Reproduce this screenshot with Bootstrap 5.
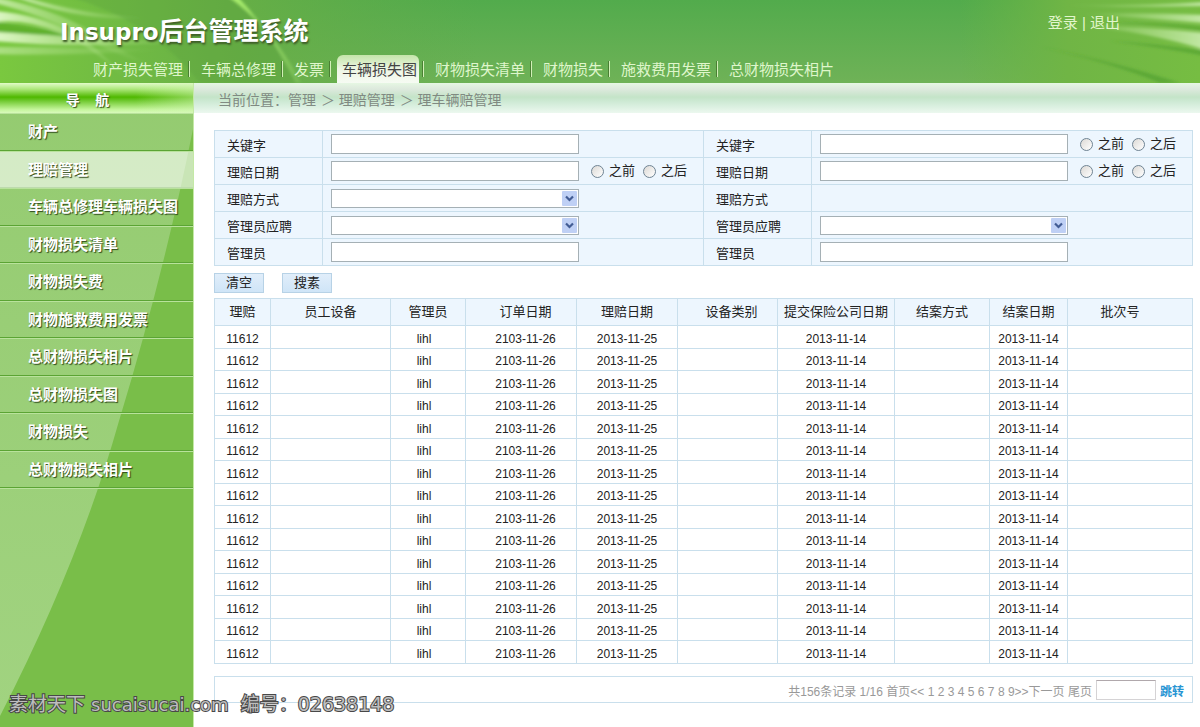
<!DOCTYPE html>
<html lang="zh-CN">
<head>
<meta charset="utf-8">
<meta name="viewport" content="width=device-width, initial-scale=1">
<title>Insupro后台管理系统</title>
<link rel="stylesheet" href="https://cdn.jsdelivr.net/npm/bootstrap@5.3.0/dist/css/bootstrap.min.css">
<style>
  :root { --line: #c9dfec; --panel: #edf6fe; }
  body { font-family: "Liberation Sans", "Noto Sans CJK SC", sans-serif; font-size: 13px; line-height: 18px; color: #222; background: #fff; }
  a { text-decoration: none; }

  /* header */
  .site-head { height: 83px; background: linear-gradient(#52ab4c, #6fb257); overflow: hidden; }
  .head-art { position: absolute; inset: 0; width: 100%; height: 100%; }
  .site-title { font: bold 25px/32px "DejaVu Sans", "Noto Sans CJK SC", sans-serif; color: #fff; margin: 0; padding: 16px 0 0 60px; text-shadow: 1px 2px 2px #3d5a26; }
  .site-title span { font-size: 23px; }
  .account { padding: 13px 80px 0 0; font-size: 15px; line-height: 20px; color: #e2f6cc; }
  .account a { color: inherit; }
  .main-tabs { padding-left: 82px; font-size: 15px; line-height: 30px; }
  .main-tabs li { display: flex; align-items: center; padding-left: 6px; }
  .main-tabs li:not(:last-child)::after { content: ""; width: 2px; height: 16px; background: linear-gradient(90deg, #4a7f33 50%, #d2f0b8 50%); }
  .main-tabs a { padding: 0 2px 0 5px; margin-right: 3px; height: 28px; color: #dff6cb; border-radius: 6px 6px 0 0; white-space: nowrap; }
  .main-tabs a.active { background: linear-gradient(#c4e5a9, #edf6e4 50%, #f6fbf3); color: #444; }

  /* sidebar */
  .side { width: 194px; background: #79be49; border-right: 1px solid #c4e9a6; }
  .side-art { position: absolute; inset: 0; width: 100%; height: 100%; }
  .side-title { height: 30px; padding-right: 18px; font-size: 14px; font-weight: bold; line-height: 34px; color: #fff; text-shadow: 1px 1px 1px #33511c; white-space: pre;
    background: linear-gradient(90deg, transparent 70%, #d2f5b477), linear-gradient(#e2fbc9, #aee87c 20%, #4fb800 47%, #6cc72b 58%, #c4f59b 88%, #d8fabb); }
  .side-menu li { height: 38px; border-bottom: 1px solid #5ba434; border-top: 1px solid #b9e29c; }
  .side-menu li:nth-child(even) { height: 37px; }
  .side-menu li:last-child { box-shadow: 0 1px #b9e29c; }
  .side-menu a { display: block; padding-left: 28px; font-size: 15px; font-weight: bold; line-height: 36px; color: #fff; text-shadow: 1px 1px 1px #2e4a1b; white-space: nowrap; }
  .side-menu a.active { background: rgba(255,255,255,.6); }

  /* content */
  .crumbs { height: 30px; padding-left: 24px; font-size: 14px; line-height: 34px; color: #808a82;
    background: linear-gradient(#e6f7e3, #dde9dd 20%, #c4e4c8 47%, #d0ebd7 65%, #ecf8ef); }
  .crumbs a { color: inherit; margin-right: 1px; }
  .sheet { padding: 17px 8px 24px 20px; }
  .grid-box { width: 100%; border-collapse: collapse; table-layout: fixed; }
  .grid-box th, .grid-box td { border: 1px solid var(--line); padding: 0; font-weight: normal; white-space: nowrap; }
  .filters { background: var(--panel); }
  .filters tr { height: 27px; }
  .filters th { padding: 4px 0 0 12px; }
  .filters td { padding-left: 8px; }
  .filters label { cursor: pointer; }
  .field { width: 248px; height: 20px; padding: 0 4px; border: 1px solid #a5b0b5; border-radius: 0; background: #fff; font-size: 12px; }
  select.field { height: 19px; appearance: none;
    background: #fff url("data:image/svg+xml,%3Csvg xmlns='http://www.w3.org/2000/svg' width='15' height='15'%3E%3Crect width='15' height='15' rx='1' fill='%23bfd0f5'/%3E%3Cpath d='M4 5.500l3.500 3.500 3.500-3.500' fill='none' stroke='%23425c94' stroke-width='2.200'/%3E%3C/svg%3E") no-repeat right 1px center; }
  .dot { appearance: none; width: 13px; height: 13px; margin: 0 5px 0 0; border: 1px solid #6f8494; border-radius: 50%; background: linear-gradient(135deg, #dcd9d5, #fff); }
  .dot:checked { background: radial-gradient(#3a9a2a 30%, #fff 40%); }
  .actions { display: flex; gap: 18px; margin: 7px 0 5px; }
  .act { width: 50px; height: 20px; padding: 0; border: 1px solid #b7d2e6; border-radius: 0; background: linear-gradient(#e1eefa, #cfe5f7); font-size: 13px; line-height: 18px; color: #222; }
  .records { font-size: 12px; text-align: center; }
  .records thead { background: var(--panel); font-size: 13px; }
  .records thead tr { height: 27px; }
  .records tbody tr { height: 22px; }
  .records tbody tr:nth-child(odd) { height: 23px; }
  .records tbody td { padding-top: 3px; line-height: 16px; }
  .records .c-user { padding-right: 8px; }
  .records .c-order { padding-left: 9px; }
  .records .c-type { padding-left: 8px; }
  .records .c-batch { padding-right: 20px; }
  .w1 { width: 56px } .w2 { width: 120px } .w3 { width: 75px } .w4 { width: 111px } .w5 { width: 101px }
  .w6 { width: 100px } .w7 { width: 117px } .w8 { width: 95px } .w9 { width: 78px } .w10 { width: 125px }
  .f1 { width: 108px } .f2 { width: 381px }
  .pager { height: 27px; margin-top: 12px; border: 1px solid var(--line); padding-right: 8px; font-size: 12px; color: #999; white-space: pre; }
  .pager > span, .pager .jump { padding-top: 4px; }
  .pager a { color: inherit; }
  .pager a.jump { color: #2795d3; font-weight: bold; }
  .pager input { width: 60px; height: 20px; margin: 0 4px; border: 1px solid #d5d3d5; border-top-color: #b0a8ac; padding: 0 4px; }

  .stamp { position: absolute; left: 9px; bottom: 9px; font: 19px/26px "DejaVu Sans", "Noto Sans CJK SC", sans-serif; color: #bdbdbd; -webkit-text-stroke: 2px #484848; paint-order: stroke fill; white-space: pre; pointer-events: none; }
  .stamp span { font-size: 18px; }
</style>
</head>
<body class="d-flex flex-column min-vh-100 position-relative">

<header class="site-head position-relative">
  <svg class="head-art" viewBox="0 0 1200 83" preserveAspectRatio="none" aria-hidden="true">
    <defs>
      <linearGradient id="left" x1="0" x2="1"><stop offset="0" stop-color="#7ac83f"/><stop offset=".5" stop-color="#68af45" stop-opacity=".9"/><stop offset="1" stop-color="#62ab4b" stop-opacity="0"/></linearGradient>
      <linearGradient id="right" x1="0" x2="1"><stop offset="0" stop-color="#6bb443" stop-opacity="0"/><stop offset=".45" stop-color="#70b545"/><stop offset="1" stop-color="#76bd42"/></linearGradient>
      <linearGradient id="ray" x1="0" x2="1"><stop offset="0" stop-color="#f0ffe0" stop-opacity=".85"/><stop offset=".4" stop-color="#e0fac4" stop-opacity=".5"/><stop offset="1" stop-color="#d4f8ac" stop-opacity="0"/></linearGradient>
      <linearGradient id="ray2" x1="0" x2="1"><stop offset="0" stop-color="#d4f8ac" stop-opacity="0"/><stop offset="1" stop-color="#ecffdc" stop-opacity=".65"/></linearGradient>
      <linearGradient id="arc" x1="0" x2="0" y1="0" y2="1"><stop offset="0" stop-color="#a9ef6d"/><stop offset="1" stop-color="#a9e574" stop-opacity=".2"/></linearGradient>
      <filter id="soft"><feGaussianBlur stdDeviation="1.500"/></filter>
    </defs>
    <rect width="480" height="83" fill="url(#left)"/>
    <rect x="960" width="240" height="83" fill="url(#right)"/>
    <g filter="url(#soft)">
      <path d="M70 -3H232Q270 30 296 83H200Q150 20 70 -3Z" fill="#5aa03c" opacity=".35"/>
      <path d="M-5 22Q60 30 90 42Q50 36 -5 32Z" fill="#4fa321" opacity=".6"/>
      <path d="M-5 11Q40 15 72 32Q100 48 130 83Q95 48 60 33T-5 22Z" fill="url(#ray)"/>
      <path d="M-5 -3Q55 10 85 28T150 66Q105 50 75 33T-5 3Z" fill="url(#ray)" opacity=".7"/>
      <path d="M-5 32Q60 36 180 42Q80 49 -5 41Z" fill="url(#ray)"/>
      <path d="M-5 47Q70 47 160 50Q70 56 -5 54Z" fill="url(#ray)" opacity=".5"/>
      <path d="M25 -3Q80 14 145 18Q80 22 15 -3Z" fill="url(#ray)" opacity=".8"/>
      <path d="M229 -3Q276 32 301 83H296Q269 29 238 -3Z" fill="url(#arc)"/>
      <path d="M1060 5Q1140 6 1205 2V6Q1120 8 1060 5Z" fill="url(#ray2)"/>
      <path d="M1080 14Q1140 12 1205 15V23Q1140 18 1080 14Z" fill="url(#ray2)"/>
      <path d="M1075 25Q1140 26 1205 33V50Q1150 32 1075 25Z" fill="url(#ray2)"/>
      <path d="M1110 41Q1160 44 1205 51V56Q1160 47 1110 41Z" fill="#4c9c2b" opacity=".6"/>
      <path d="M1040 47Q1120 63 1180 83H1160Q1110 62 1040 47Z" fill="#4c9c2b" opacity=".6"/>
      <path d="M1110 23Q1160 24 1205 31V27Q1160 22 1110 23Z" fill="#4c9c2b" opacity=".5"/>
    </g>
  </svg>
  <div class="position-relative h-100 d-flex flex-column justify-content-between">
    <div class="d-flex justify-content-between align-items-start">
      <h1 class="site-title"><span>Insupro</span>后台管理系统</h1>
      <div class="account"><a href="#">登录</a> | <a href="#">退出</a></div>
    </div>
    <nav>
      <ul class="main-tabs list-unstyled d-flex mb-0">
        <li><a href="#">财产损失管理</a></li>
        <li><a href="#">车辆总修理</a></li>
        <li><a href="#">发票</a></li>
        <li><a href="#" class="active">车辆损失图</a></li>
        <li><a href="#">财物损失清单</a></li>
        <li><a href="#">财物损失</a></li>
        <li><a href="#">施救费用发票</a></li>
        <li><a href="#">总财物损失相片</a></li>
      </ul>
    </nav>
  </div>
</header>

<div class="d-flex flex-grow-1">
  <aside class="side position-relative flex-shrink-0">
    <svg class="side-art" viewBox="0 0 194 644" preserveAspectRatio="none" aria-hidden="true">
      <defs><linearGradient id="sheen" x1="0" x2="0" y1="0" y2="1"><stop offset="0" stop-color="#94cb70"/><stop offset="1" stop-color="#a1d380"/></linearGradient></defs>
      <path d="M0 0H194V46Q165 190 119 340Q80 478 0 633Z" fill="url(#sheen)"/>
    </svg>
    <div class="position-relative">
      <div class="side-title text-center">导    航</div>
      <ul class="side-menu list-unstyled mb-0">
        <li><a href="#">财产</a></li>
        <li><a href="#" class="active">理赔管理</a></li>
        <li><a href="#">车辆总修理车辆损失图</a></li>
        <li><a href="#">财物损失清单</a></li>
        <li><a href="#">财物损失费</a></li>
        <li><a href="#">财物施救费用发票</a></li>
        <li><a href="#">总财物损失相片</a></li>
        <li><a href="#">总财物损失图</a></li>
        <li><a href="#">财物损失</a></li>
        <li><a href="#">总财物损失相片</a></li>
      </ul>
    </div>
  </aside>

  <main class="flex-grow-1">
    <div class="crumbs">当前位置：<a href="#">管理</a> ＞ <a href="#">理赔管理</a> ＞ <a href="#">理车辆赔管理</a></div>
    <div class="sheet">
      <form>
        <table class="grid-box filters">
          <colgroup><col class="f1"><col class="f2"><col class="f1"><col class="f2"></colgroup>
          <tr>
            <th><label for="k1">关键字</label></th>
            <td><input class="field d-block" id="k1" type="text"></td>
            <th><label for="k2">关键字</label></th>
            <td><div class="d-flex align-items-center"><input class="field" id="k2" type="text">
              <label class="d-flex align-items-center ms-2 ps-1"><input class="dot" type="radio" name="r1">之前</label>
              <label class="d-flex align-items-center ms-2"><input class="dot" type="radio" name="r1">之后</label></div></td>
          </tr>
          <tr>
            <th><label for="d1">理赔日期</label></th>
            <td><div class="d-flex align-items-center"><input class="field" id="d1" type="text">
              <label class="d-flex align-items-center ms-2 ps-1"><input class="dot" type="radio" name="r2">之前</label>
              <label class="d-flex align-items-center ms-2"><input class="dot" type="radio" name="r2">之后</label></div></td>
            <th><label for="d2">理赔日期</label></th>
            <td><div class="d-flex align-items-center"><input class="field" id="d2" type="text">
              <label class="d-flex align-items-center ms-2 ps-1"><input class="dot" type="radio" name="r3">之前</label>
              <label class="d-flex align-items-center ms-2"><input class="dot" type="radio" name="r3">之后</label></div></td>
          </tr>
          <tr>
            <th><label for="m1">理赔方式</label></th>
            <td><select class="field d-block" id="m1"><option></option></select></td>
            <th>理赔方式</th>
            <td></td>
          </tr>
          <tr>
            <th><label for="a1">管理员应聘</label></th>
            <td><select class="field d-block" id="a1"><option></option></select></td>
            <th><label for="a2">管理员应聘</label></th>
            <td><select class="field d-block" id="a2"><option></option></select></td>
          </tr>
          <tr>
            <th><label for="u1">管理员</label></th>
            <td><input class="field d-block" id="u1" type="text"></td>
            <th><label for="u2">管理员</label></th>
            <td><input class="field d-block" id="u2" type="text"></td>
          </tr>
        </table>
        <div class="actions">
          <button type="reset" class="btn act">清空</button>
          <button type="button" class="btn act">搜素</button>
        </div>
      </form>

      <table class="grid-box records">
        <colgroup><col class="w1"><col class="w2"><col class="w3"><col class="w4"><col class="w5"><col class="w6"><col class="w7"><col class="w8"><col class="w9"><col class="w10"></colgroup>
        <thead>
          <tr><th>理赔</th><th>员工设备</th><th>管理员</th><th class="c-order">订单日期</th><th>理赔日期</th><th class="c-type">设备类别</th><th>提交保险公司日期</th><th>结案方式</th><th>结案日期</th><th class="c-batch">批次号</th></tr>
        </thead>
        <tbody id="rows"></tbody>
      </table>

      <nav class="pager d-flex align-items-center justify-content-end"><span>共156条记录 1/16 <a href="#">首页</a><a href="#">&lt;&lt;</a> <a href="#">1</a> <a href="#">2</a> <a href="#">3</a> <a href="#">4</a> <a href="#">5</a> <a href="#">6</a> <a href="#">7</a> <a href="#">8</a> <a href="#">9</a><a href="#">&gt;&gt;下一页</a> <a href="#">尾页</a></span><input type="text" aria-label="页码"><a href="#" class="jump">跳转</a></nav>
    </div>
  </main>
</div>

<div class="stamp">素材天下 <span>sucaisucai.com</span>  编号：02638148</div>

<script src="https://cdn.jsdelivr.net/npm/bootstrap@5.3.0/dist/js/bootstrap.bundle.min.js"></script>
<script>
  const record = ["11612", "", "lihl", "2103-11-26", "2013-11-25", "", "2013-11-14", "", "2013-11-14", ""];
  const cls = { 2: "c-user", 3: "c-order" };
  document.getElementById("rows").innerHTML = Array.from({ length: 15 }, () =>
    "<tr>" + record.map((v, i) => `<td class="${cls[i] || ""}">${v}</td>`).join("") + "</tr>").join("");
</script>
</body>
</html>
